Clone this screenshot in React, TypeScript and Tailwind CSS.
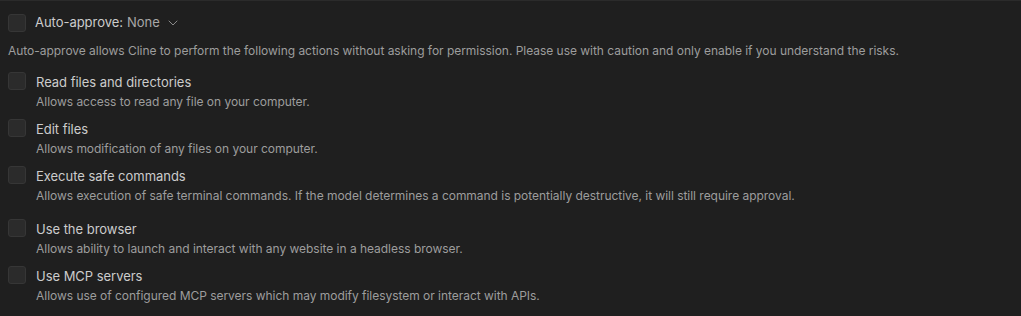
import { ChevronDown } from 'lucide-react';

// Auto-approve settings panel
const ACTIONS = [
  { label: 'Read files and directories', desc: 'Allows access to read any file on your computer.' },
  { label: 'Edit files', desc: 'Allows modification of any files on your computer.' },
  {
    label: 'Execute safe commands',
    desc: 'Allows execution of safe terminal commands. If the model determines a command is potentially destructive, it will still require approval.',
  },
  { label: 'Use the browser', desc: 'Allows ability to launch and interact with any website in a headless browser.' },
  { label: 'Use MCP servers', desc: 'Allows use of configured MCP servers which may modify filesystem or interact with APIs.' },
];

function Checkbox() {
  return <div className="w-[18px] h-[18px] shrink-0 rounded-[3px] bg-[#2b2b2b] border border-[#363636]" />;
}

export default function App() {
  return (
    <div
      className="w-[1021px] h-[316px] bg-[#1f1f1f] border-t border-[#2b2b2b] text-[#cccccc] overflow-hidden tracking-[-0.03px]"
      style={{ fontFamily: 'Inter, "Noto Sans", sans-serif' }}
    >
      <div className="flex items-center h-[42px] pl-2 pt-[1px]">
        <Checkbox />
        <span className="ml-[9px] text-[13px]">Auto-approve:</span>
        <span className="ml-1 text-[13px] text-[#a8a8a8]">None</span>
        <ChevronDown className="ml-[5px] w-4 h-4 text-[#a0a0a0]" strokeWidth={1.25} />
      </div>

      <p className="pl-2 text-[12px] text-[#9d9d9d] leading-[16px]">
        Auto-approve allows Cline to perform the following actions without asking for permission. Please use with caution and only enable if you understand the risks.
      </p>

      <div className="mt-[13px] flex flex-col">
        {ACTIONS.map((a, i) => (
          <div key={a.label} className={`flex pl-2 ${i === 2 ? 'h-[53px]' : 'h-[47px]'}`}>
            <Checkbox />
            <div className="ml-[10px] flex flex-col pt-[1px]">
              <span className="text-[13px] leading-[18px] text-[#cccccc]">{a.label}</span>
              <span className="mt-[3px] text-[12px] leading-[16px] text-[#9d9d9d]">{a.desc}</span>
            </div>
          </div>
        ))}
      </div>
    </div>
  );
}
